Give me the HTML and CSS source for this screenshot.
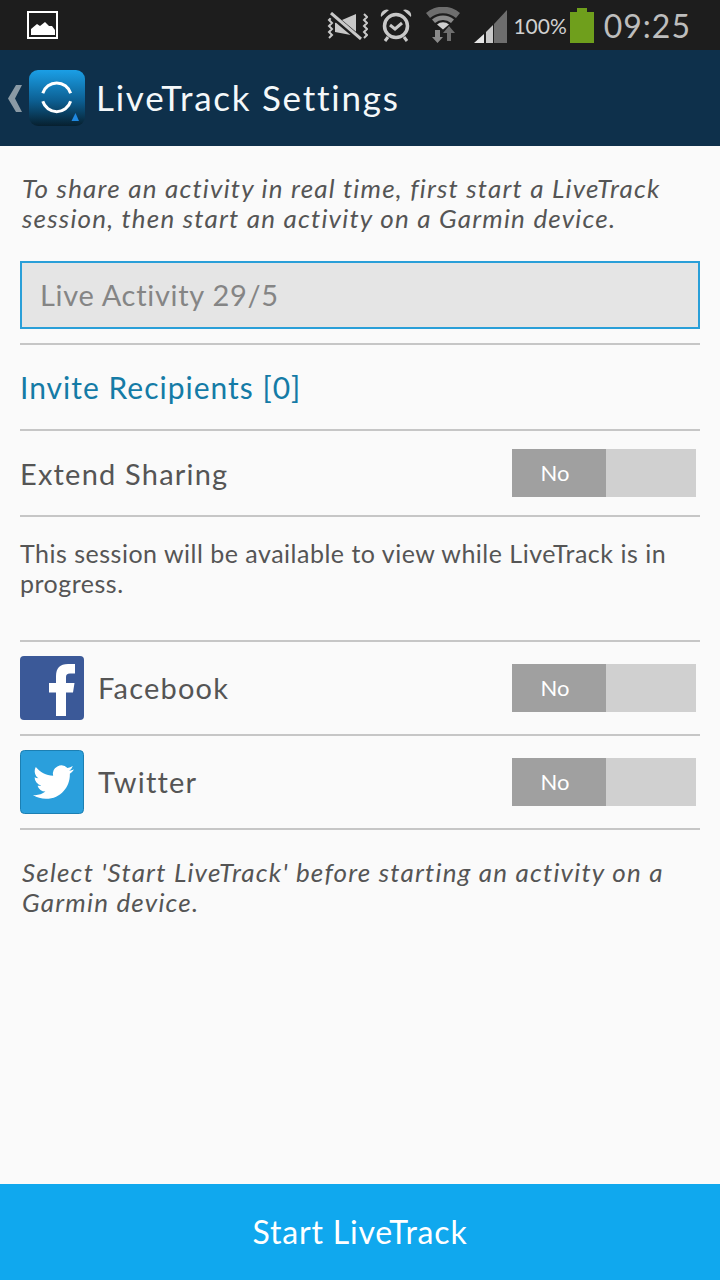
FILE: index.html
```html
<!DOCTYPE html>
<html lang="en">
<head>
    <meta charset="UTF-8">
    <meta name="viewport" content="width=device-width, initial-scale=1.0">
    <title>LiveTrack Settings</title>
    <link rel="stylesheet" href="styles.css">
</head>
<body>
    <div class="status-bar">
        <svg class="notify-icon" width="31" height="28" viewBox="0 0 31 28">
            <rect x="1" y="1" width="29" height="26" fill="none" stroke="#fff" stroke-width="2"/>
            <path d="M4 24v-6l6-5 3 2 5-4 4 4 3 0 3 4v5z" fill="#fff"/>
        </svg>
        <div class="status-icons">
            <svg class="mute-icon" width="41" height="28" viewBox="0 0 41 28">
                <path d="M2 2l3 3-3 3 3 3-3 3 3 3-3 3 3 3-3 3M37 2l3 3-3 3 3 3-3 3 3 3-3 3 3 3-3 3" fill="none" stroke="#c8c8c8" stroke-width="2"/>
                <path d="M8 11L29 2v22L8 20z" fill="#c8c8c8"/>
                <path d="M2 1l31 26" stroke="#1d1d1d" stroke-width="6"/>
                <path d="M4 1l30 26" stroke="#c8c8c8" stroke-width="3"/>
            </svg>
            <svg class="alarm-icon" width="32" height="34" viewBox="0 0 32 34">
                <circle cx="16" cy="18" r="11.500" fill="none" stroke="#c8c8c8" stroke-width="3.500"/>
                <path d="M1 9a6 6 0 0 1 8-7zM31 9a6 6 0 0 0-8-7z" fill="#c8c8c8"/>
                <path d="M10 17l5 4 7-6" fill="none" stroke="#c8c8c8" stroke-width="3"/>
                <path d="M8 29l-3 4M24 29l3 4" stroke="#c8c8c8" stroke-width="3"/>
            </svg>
            <svg class="wifi-icon" width="34" height="36" viewBox="0 0 34 36">
                <path d="M0 6a26 26 0 0 1 34 0l-4 5a20 20 0 0 0-26 0z" fill="#6e6e6e"/>
                <path d="M6 12.500a17 17 0 0 1 22 0l-3 3.500a12 12 0 0 0-16 0z" fill="#8a8a8a"/>
                <path d="M11 17.500a9 9 0 0 1 12 0l-6 5z" fill="#d0d0d0"/>
                <path d="M9 23h5v7h3l-5.500 6L6 30h3z" fill="#8a8a8a"/>
                <path d="M21 34v-8h-4l6-7 6 7h-4v8z" fill="#6e6e6e"/>
            </svg>
            <svg class="signal-icon" width="33" height="33" viewBox="0 0 33 33">
                <path d="M0 33l10-9v9z" fill="#e6e6e6"/>
                <path d="M12 33V22l7-7v18z" fill="#c8c8c8"/>
                <path d="M20 33V14L33 0v33z" fill="#6e6e6e"/>
            </svg>
            <span class="battery-text">100%</span>
            <div class="battery"><div class="battery-cap"></div></div>
            <span class="clock">09:25</span>
        </div>
    </div>

    <div class="action-bar">
        <svg class="back-icon" width="14" height="27" viewBox="0 0 14 27">
            <path d="M8 0h6L7 13.500 14 27H8L0 13.500z" fill="#8a9aa5"/>
        </svg>
        <svg class="app-icon" width="56" height="56" viewBox="0 0 56 56">
            <defs>
                <linearGradient id="appGrad" x1="0" y1="0" x2="0" y2="1">
                    <stop offset="0" stop-color="#1b9fe6"/>
                    <stop offset="0.55" stop-color="#0c5f92"/>
                    <stop offset="1" stop-color="#07202f"/>
                </linearGradient>
            </defs>
            <rect width="56" height="56" rx="9" fill="url(#appGrad)"/>
            <path d="M13.800 23.300A14.500 14.500 0 0 1 41.600 23.300M41.600 31.300A14.500 14.500 0 0 1 13.800 31.300" fill="none" stroke="#fff" stroke-width="3"/>
            <path d="M46.500 43l3.500 8h-7.500z" fill="#1e88e0"/>
        </svg>
        <h1 class="screen-title">LiveTrack Settings</h1>
    </div>

    <div class="content">
        <p class="note hint-top">To share an activity in real time, first start a LiveTrack session, then start an activity on a Garmin device.</p>
        <div class="activity-input">Live Activity 29/5</div>

        <div class="row invite-row">Invite Recipients [0]</div>

        <div class="row extend-row">
            <span class="row-label">Extend Sharing</span>
            <div class="toggle"><span class="toggle-on">No</span></div>
        </div>

        <p class="plain-note">This session will be available to view while LiveTrack is in progress.</p>

        <div class="row">
            <svg class="social-icon" width="64" height="64" viewBox="0 0 64 64">
                <rect width="64" height="64" rx="4" fill="#3b5998"/>
                <path d="M36 60V36.500h-7V27h7v-7c0-8 4-12 12-12h7v9.500h-5c-3 0-4 1.500-4 3.500v6h8.500L53 36.500h-7V60z" fill="#fff"/>
            </svg>
            <span class="row-label social-label">Facebook</span>
            <div class="toggle"><span class="toggle-on">No</span></div>
        </div>

        <div class="row">
            <svg class="social-icon" width="64" height="64" viewBox="0 0 64 64">
                <rect x="0.500" y="0.500" width="63" height="63" rx="4" fill="#2a9fdc" stroke="#1c7fb2"/>
                <path transform="translate(13 11.600) scale(1.710)" d="M23.953 4.570a10 10 0 0 1-2.825.775 4.958 4.958 0 0 0 2.163-2.723c-.951.555-2.005.959-3.127 1.184a4.920 4.920 0 0 0-8.384 4.482C7.690 8.095 4.067 6.130 1.640 3.162a4.822 4.822 0 0 0-.666 2.475c0 1.710.870 3.213 2.188 4.096a4.904 4.904 0 0 1-2.228-.616v.060a4.923 4.923 0 0 0 3.946 4.827 4.996 4.996 0 0 1-2.212.085 4.936 4.936 0 0 0 4.604 3.417 9.867 9.867 0 0 1-6.102 2.105c-.390 0-.779-.023-1.170-.067a13.995 13.995 0 0 0 7.557 2.209c9.053 0 13.998-7.496 13.998-13.985 0-.210 0-.420-.015-.630A9.935 9.935 0 0 0 24 4.590z" fill="#fff"/>
            </svg>
            <span class="row-label social-label">Twitter</span>
            <div class="toggle"><span class="toggle-on">No</span></div>
        </div>

        <p class="note hint-bottom">Select 'Start LiveTrack' before starting an activity on a Garmin device.</p>
    </div>

    <div class="start-button">Start LiveTrack</div>
</body>
</html>
```

FILE: styles.css
```css
* {
    margin: 0;
    padding: 0;
    box-sizing: border-box;
    font-family: Lato, "Open Sans", sans-serif;
}

body {
    width: 720px;
    height: 1280px;
    display: flex;
    flex-direction: column;
    background: #fafafa;
    color: #555;
    overflow: hidden;
}

.status-bar {
    height: 50px;
    background: #1d1d1d;
    display: flex;
    align-items: center;
    justify-content: space-between;
    padding: 0 29px 0 27px;
}

.status-icons {
    display: flex;
    align-items: center;
}

.mute-icon {
    margin-right: 12px;
    margin-top: 1px;
}

.alarm-icon {
    margin-right: 14px;
}

.wifi-icon {
    margin-right: 14px;
}

.signal-icon {
    margin-top: 3px;
}

.battery-text {
    font-size: 21px;
    color: #d0d0d0;
    margin: 0 3px 0 6px;
}

.battery {
    width: 24px;
    height: 31px;
    margin-top: 5px;
    background: #6f9f1c;
    position: relative;
}

.battery-cap {
    position: absolute;
    top: -4px;
    left: 7px;
    width: 10px;
    height: 4px;
    background: #6f9f1c;
}

.clock {
    font-size: 32px;
    color: #bdbdbd;
    letter-spacing: 1px;
    margin-left: 10px;
}

.action-bar {
    height: 96px;
    background: #0e304b;
    display: flex;
    align-items: center;
    padding-left: 8px;
}

.app-icon {
    margin-left: 7px;
}

.screen-title {
    font-size: 35px;
    font-weight: 400;
    color: #f4f8fa;
    margin-left: 11px;
    margin-bottom: 2px;
    letter-spacing: 1.750px;
}

.content {
    flex: 1;
    padding: 0 20px;
}

.note {
    font-size: 26px;
    line-height: 30px;
    font-style: italic;
    color: #555;
    letter-spacing: 1.200px;
    padding-left: 2px;
}

.hint-top {
    padding-top: 27px;
    padding-bottom: 28px;
}

.activity-input {
    height: 68px;
    border: 2px solid #2a9fd8;
    background: #e5e5e5;
    color: #858585;
    font-size: 29px;
    line-height: 64px;
    padding-left: 18px;
    letter-spacing: 0.700px;
    margin-bottom: 14px;
}

.row {
    height: 94px;
    display: flex;
    align-items: center;
    border-top: 2px solid #c6c6c6;
}

.invite-row {
    height: 86px;
    color: #147ba6;
    font-size: 30px;
    letter-spacing: 1px;
}

.extend-row {
    height: 86px;
}

.row-label {
    font-size: 29px;
    letter-spacing: 1.200px;
    flex: 1;
}

.social-label {
    margin-left: 14px;
    margin-bottom: 2px;
}

.social-icon {
    flex-shrink: 0;
}

.toggle {
    width: 184px;
    height: 48px;
    margin-right: 4px;
    background: #d0d0d0;
}

.toggle-on {
    display: block;
    width: 94px;
    height: 48px;
    background: #a0a0a0;
    color: #fff;
    font-size: 22px;
    line-height: 48px;
    padding-right: 8px;
    text-align: center;
}

.plain-note {
    font-size: 25px;
    line-height: 30px;
    letter-spacing: 0.500px;
    border-top: 2px solid #c6c6c6;
    padding: 21px 0 42px;
}

.hint-bottom {
    border-top: 2px solid #c6c6c6;
    padding-top: 27px;
}

.start-button {
    height: 96px;
    background: #10a8ee;
    color: #fff;
    font-size: 32px;
    line-height: 96px;
    text-align: center;
    letter-spacing: 0.800px;
}
```
